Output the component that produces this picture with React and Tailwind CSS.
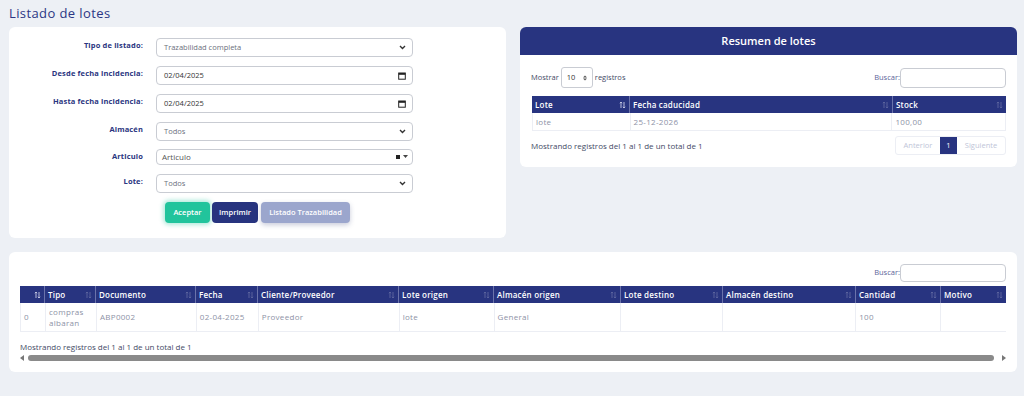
import React from "react";

const F = { fontFamily: '"Open Sans", "DejaVu Sans", sans-serif' };

function SortIcon({ active }) {
  return (
    <svg width="7" height="8" viewBox="0 0 7 8" className="shrink-0">
      <g stroke={active ? "#c9cde6" : "#5d669f"} strokeWidth="0.9" fill="none">
        <path d="M2 7V1M0.8 2.2L2 1l1.2 1.2" />
        <path d="M5 1v6M3.8 5.8L5 7l1.2-1.2" />
      </g>
    </svg>
  );
}

function Chevron() {
  return (
    <svg width="7" height="5" viewBox="0 0 7 5">
      <path d="M1 1l2.5 2.5L6 1" stroke="#333" strokeWidth="1.4" fill="none" />
    </svg>
  );
}

function Cal() {
  return (
    <svg width="8" height="8" viewBox="0 0 8 8">
      <rect x="0.7" y="1" width="6.6" height="6.2" stroke="#222" strokeWidth="1" fill="none" />
      <rect x="0.7" y="1" width="6.6" height="1.8" fill="#222" />
    </svg>
  );
}

function Field({ children, right, h = "h-[19px]", cls = "" }) {
  return (
    <div className={`${h} w-[257px] rounded-[4px] border border-[#c9ccd3] bg-white flex items-center justify-between pl-[7px] pr-[6px] ${cls}`}>
      <span className="text-[7.5px] text-[#6b6f7d]">{children}</span>
      {right}
    </div>
  );
}

function Label({ children }) {
  return (
    <div className="w-[134px] text-right pr-0 text-[7.5px] font-bold tracking-[0.15px] text-[#2a3580] pt-[2px]">{children}</div>
  );
}

function Th({ children, w, active, first }) {
  return (
    <div
      className={`flex items-center justify-between px-[3px] h-full ${first ? "" : "border-l border-[#6b73ab]"}`}
      style={{ width: w }}
    >
      <span className="text-[8px] font-semibold tracking-[0.2px] text-white">{children}</span>
      <SortIcon active={active} />
    </div>
  );
}

function Td({ children, w, first }) {
  return (
    <div
      className={`flex items-center px-[3px] h-full text-[8px] tracking-[0.3px] text-[#8d92a6] ${first ? "" : "border-l border-[#eceef4]"}`}
      style={{ width: w }}
    >
      {children}
    </div>
  );
}

export default function App() {
  const cols = [
    ["", 24, true],
    ["Tipo", 51],
    ["Documento", 100],
    ["Fecha", 62],
    ["Cliente/Proveedor", 141],
    ["Lote origen", 95],
    ["Almacén origen", 127],
    ["Lote destino", 102],
    ["Almacén destino", 133],
    ["Cantidad", 85],
    ["Motivo", 66],
  ];
  const row = [
    "0",
    <span className="leading-[11px]">compras<br />albaran</span>,
    "ABP0002",
    "02-04-2025",
    "Proveedor",
    "lote",
    "General",
    "",
    "",
    "100",
    "",
  ];
  return (
    <div style={F} className="w-[1024px] h-[396px] bg-[#edf0f5] pl-[9px] pr-[7px] overflow-hidden">
      <div className="h-[27px] flex items-start pt-[4px] text-[13px] tracking-[0.4px] text-[#2b3684]">Listado de lotes</div>
      <div className="flex gap-[14px]">
        {/* left card */}
        <div className="w-[497px] h-[211px] bg-white rounded-[6px] pt-[11px]">
          <div className="flex flex-col">
            {[
              ["Tipo de listado:", <Field right={<Chevron />}>Trazabilidad completa</Field>],
              ["Desde fecha incidencia:", <Field right={<Cal />}><span className="text-[#333]">02/04/2025</span></Field>],
              ["Hasta fecha incidencia:", <Field right={<Cal />}><span className="text-[#333]">02/04/2025</span></Field>],
              ["Almacén", <Field right={<Chevron />}>Todos</Field>],
            ].map(([l, f], i) => (
              <div key={i} className="flex gap-[13px] mb-[9px]">
                <Label>{l}</Label>
                {f}
              </div>
            ))}
            <div className="flex gap-[13px] mb-[9px] -mt-[1px]">
              <Label>Articulo</Label>
              <div className="h-[16px] w-[257px] rounded-[4px] border border-[#c9ccd3] bg-white flex items-center justify-between pl-[5px] pr-[4px]">
                <span className="text-[8px] text-[#555]">Articulo</span>
                <span className="flex items-center gap-[3px]">
                  <span className="w-[4px] h-[4px] bg-[#222]" />
                  <svg width="5" height="4" viewBox="0 0 5 4"><path d="M0 0h5L2.5 3z" fill="#444" /></svg>
                </span>
              </div>
            </div>
            <div className="flex gap-[13px] mb-[9px]">
              <Label>Lote:</Label>
              <Field right={<Chevron />}>Todos</Field>
            </div>
            <div className="flex gap-[2px] ml-[156px]">
              <div className="h-[21px] w-[45px] rounded-[4px] bg-[#21c49c] text-white text-[7.5px] font-semibold flex items-center justify-center shadow-[0_0_4px_2px_rgba(33,196,156,0.35)]">Aceptar</div>
              <div className="h-[21px] w-[46px] rounded-[4px] bg-[#27347f] text-white text-[7.5px] font-semibold flex items-center justify-center ml-[0px]">Imprimir</div>
              <div className="h-[21px] w-[89px] ml-[1px] rounded-[4px] bg-[#9ba6cd] text-white text-[7.5px] font-semibold flex items-center justify-center shadow-[0_2px_5px_rgba(40,50,110,0.25)]">Listado Trazabilidad</div>
            </div>
          </div>
        </div>
        {/* right card */}
        <div className="w-[497px] h-[140px] bg-white rounded-[6px] overflow-hidden flex flex-col">
          <div className="h-[28px] bg-[#283480] flex items-center justify-center text-white text-[11px] font-semibold">Resumen de lotes</div>
          <div className="px-[11px] pt-[12px]">
            <div className="flex items-center justify-between h-[21px]">
              <div className="flex items-center gap-[2px] text-[7.5px] text-[#444a66]">
                <span>Mostrar</span>
                <div className="w-[32px] h-[21px] border border-[#c9ccd3] rounded-[3px] flex items-center justify-between px-[5px]">
                  <span className="text-[7.5px] text-[#333]">10</span>
                  <svg width="4" height="6" viewBox="0 0 4 6"><path d="M0 2.4L2 0.4 4 2.4zM0 3.6L2 5.6 4 3.6z" fill="#555" /></svg>
                </div>
                <span>registros</span>
              </div>
              <div className="flex items-center text-[7.5px] text-[#5d659a]">
                <span>Buscar:</span>
                <div className="w-[106px] h-[20px] border border-[#c9ccd3] rounded-[4px]" />
              </div>
            </div>
            <div className="mt-[8px] ml-[1px] w-[474px]">
              <div className="h-[17px] bg-[#283480] flex">
                <Th w={97} active first>Lote</Th>
                <Th w={263}>Fecha caducidad</Th>
                <Th w={114}>Stock</Th>
              </div>
              <div className="h-[18px] flex border-b border-l border-r border-[#eceef4]">
                <Td w={97} first>lote</Td>
                <Td w={263}>25-12-2026</Td>
                <Td w={114}>100,00</Td>
              </div>
            </div>
            <div className="flex items-center justify-between mt-[5px]">
              <span className="text-[8px] text-[#444a66]">Mostrando registros del 1 al 1 de un total de 1</span>
              <div className="flex h-[19px] border border-[#eceef4] rounded-[3px] text-[7.5px] text-[#c0c5d8]">
                <span className="w-[44px] flex items-center justify-center">Anterior</span>
                <span className="w-[17px] flex items-center justify-center bg-[#283480] text-white">1</span>
                <span className="w-[48px] flex items-center justify-center">Siguiente</span>
              </div>
            </div>
          </div>
        </div>
      </div>
      {/* bottom card */}
      <div className="mt-[14px] w-[1008px] h-[120px] bg-white rounded-[6px] px-[11px] pt-[12px]">
        <div className="flex justify-end items-center text-[7.5px] text-[#5d659a] h-[18px]">
          <span>Buscar:</span>
          <div className="w-[106px] h-[18px] border border-[#c9ccd3] rounded-[4px]" />
        </div>
        <div className="mt-[4px] w-[986px]">
          <div className="h-[17px] bg-[#283480] flex">
            {cols.map(([t, w], i) => (
              <Th key={i} w={w} first={i === 0} active={i === 0}>{t}</Th>
            ))}
          </div>
          <div className="h-[29px] flex border-b border-l border-[#eceef4]">
            {cols.map(([t, w], i) => (
              <Td key={i} w={w} first={i === 0}>{row[i]}</Td>
            ))}
          </div>
        </div>
        <div className="mt-[9px] text-[8px] text-[#444a66]">Mostrando registros del 1 al 1 de un total de 1</div>
        <div className="flex items-center gap-[3px] mt-[1px] h-[8px]">
          <svg width="5" height="6" viewBox="0 0 5 6"><path d="M4 0v6L0 3z" fill="#777" /></svg>
          <div className="h-[6px] flex-1 rounded-full bg-[#8a8a8a]" />
          <svg width="5" height="6" viewBox="0 0 5 6" className="ml-[4px]"><path d="M1 0v6l4-3z" fill="#777" /></svg>
        </div>
      </div>
    </div>
  );
}
